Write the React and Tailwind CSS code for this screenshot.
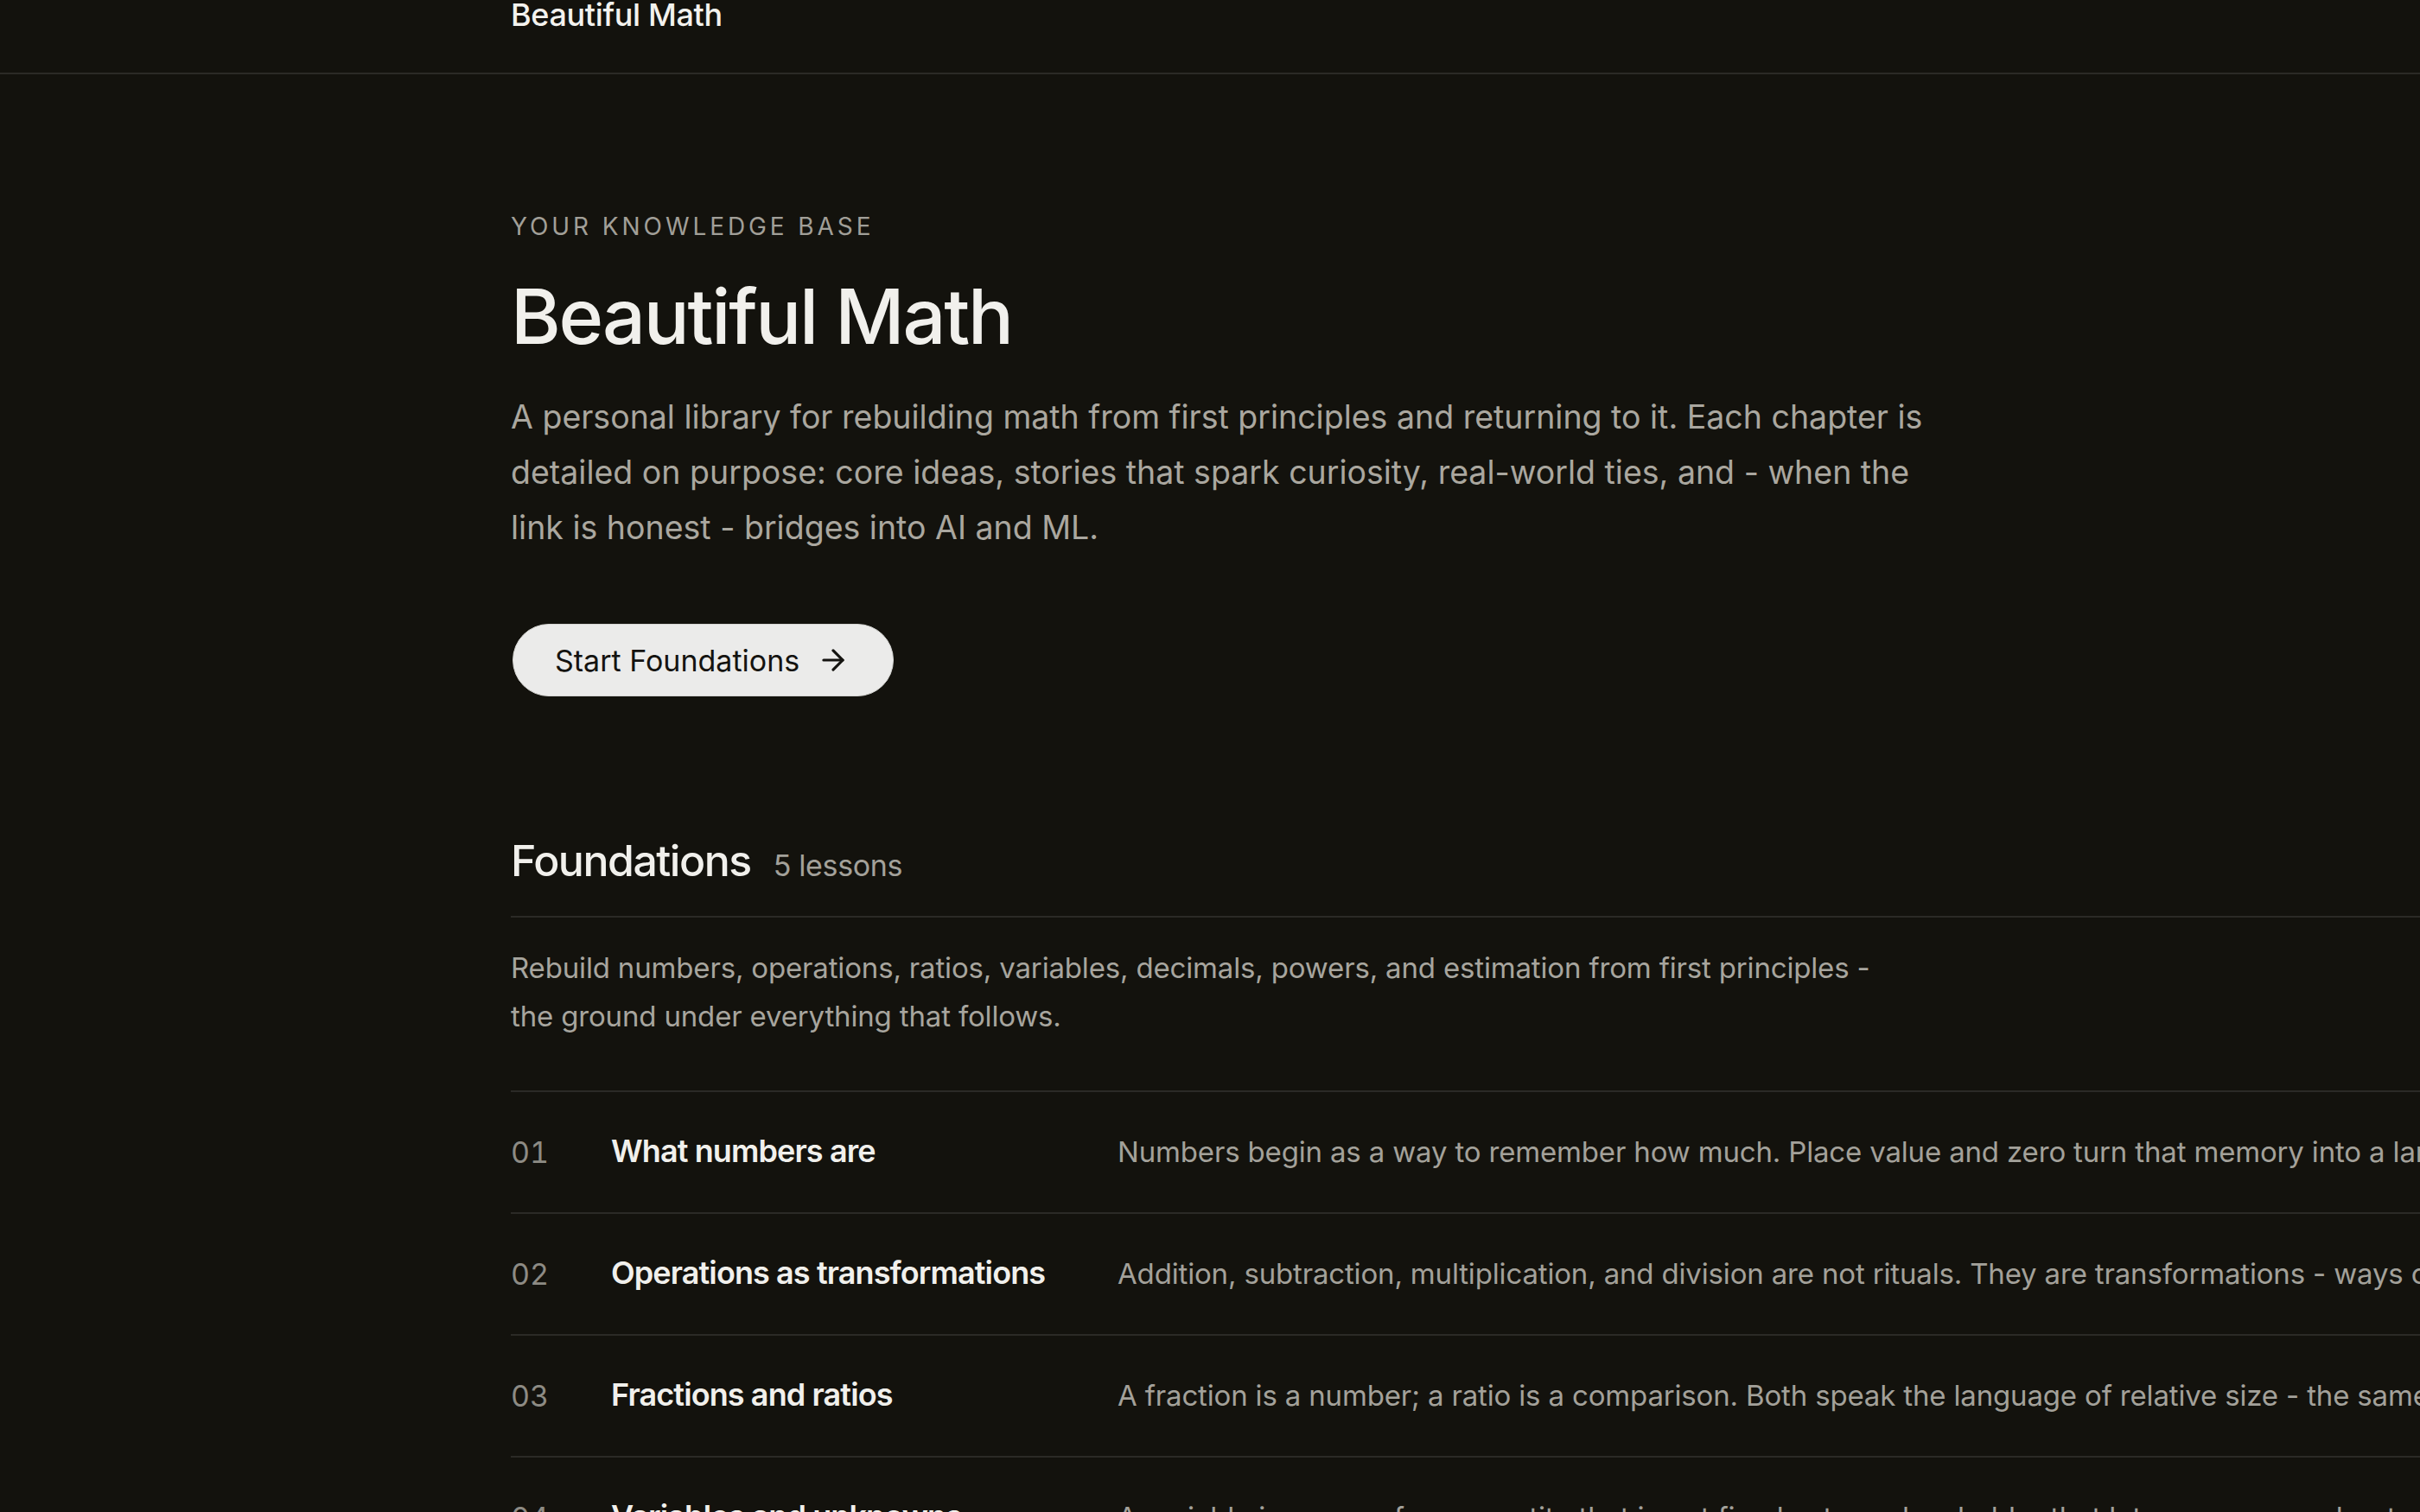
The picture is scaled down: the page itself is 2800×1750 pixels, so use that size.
import React from "react";
import { ArrowRight } from "lucide-react";

const lessons = [
    {
        num: "01",
        title: "What numbers are",
        text: "Numbers begin as a way to remember how much. Place value and zero turn that memory into a language that scales to any size.",
    },
    {
        num: "02",
        title: "Operations as transformations",
        text: "Addition, subtraction, multiplication, and division are not rituals. They are transformations - ways of moving, stretching, and splitting quantities.",
    },
    {
        num: "03",
        title: "Fractions and ratios",
        text: "A fraction is a number; a ratio is a comparison. Both speak the language of relative size - the same idea seen from two sides.",
    },
    {
        num: "04",
        title: "Variables and unknowns",
        text: "A variable is a name for a quantity that is not fixed yet - a placeholder that lets you reason about a whole family of numbers at once.",
    },
];

const LessonRow = ({ lesson }) => (
    <div className="grid grid-cols-[116px_586px_1fr] items-center h-[141px] border-b-2 border-[#2b2a26]">
        <span className="text-[34px] text-[#8d8b84] tabular-nums">
            {lesson.num}
        </span>
        <span className="-mt-[4px] text-[36px] font-semibold text-[#f1f0ec] tracking-[-0.025em]">
            {lesson.title}
        </span>
        <span className="text-[33px] text-[#a3a19a] whitespace-nowrap tracking-[-0.005em]">
            {lesson.text}
        </span>
    </div>
);

export default function App() {
    return (
        <div
            className="min-h-screen w-full overflow-hidden bg-[#13120d]"
            style={{ fontFamily: "Inter, 'Noto Sans', sans-serif" }}
        >
            {/* top bar */}
            <header className="h-[90px] border-b-2 border-[#2b2a26] pl-[591px]">
                <div className="-mt-[4px] text-[36px] leading-[43px] font-medium text-[#f3f2ee] tracking-[-0.01em]">
                    Beautiful Math
                </div>
            </header>

            <main className="pl-[591px]">
                {/* hero */}
                <section className="pt-[155px]">
                    <p className="text-[28px] leading-[42px] tracking-[0.14em] uppercase text-[#a19f98]">
                        Your knowledge base
                    </p>
                    <h1 className="mt-[35px] text-[88px] leading-[97px] font-medium tracking-[-0.025em] text-[#f1f0ec]">
                        Beautiful Math
                    </h1>
                    <p className="mt-[36px] max-w-[1660px] text-[37.5px] leading-[64px] text-[#aaa79f]">
                        A personal library for rebuilding math from first
                        principles and returning to it. Each chapter is detailed
                        on purpose: core ideas, stories that spark curiosity,
                        real-world ties, and - when the link is honest - bridges
                        into AI and ML.
                    </p>
                    <button className="mt-[79px] ml-[2px] flex items-center gap-[20px] h-[84px] pl-[48px] pr-[50px] rounded-full bg-[#ebebea] border border-[#d6d6d3] text-[34px] text-[#141310]">
                        Start Foundations
                        <ArrowRight size={38} strokeWidth={2} />
                    </button>
                </section>

                {/* foundations */}
                <section className="mt-[160px]">
                    <div className="flex items-baseline gap-[26px] pb-[33px] border-b-2 border-[#2b2a26]">
                        <h2 className="text-[50px] leading-[60px] font-medium tracking-[-0.03em] text-[#f1f0ec]">
                            Foundations
                        </h2>
                        <span className="text-[34px] text-[#a3a19a] tracking-[-0.01em]">
                            5 lessons
                        </span>
                    </div>
                    <p className="mt-[30px] max-w-[1600px] text-[33px] leading-[56px] tracking-[-0.005em] text-[#a7a59e]">
                        Rebuild numbers, operations, ratios, variables, decimals,
                        powers, and estimation from first principles - the
                        ground under everything that follows.
                    </p>
                    <div className="mt-[58px] border-t-2 border-[#2b2a26]">
                        {lessons.map((lesson) => (
                            <LessonRow key={lesson.num} lesson={lesson} />
                        ))}
                    </div>
                </section>
            </main>
        </div>
    );
}
